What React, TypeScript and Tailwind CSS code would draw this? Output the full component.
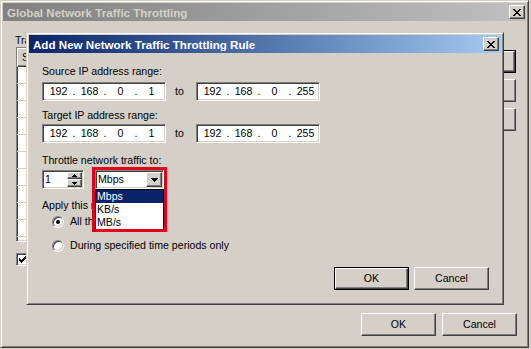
import { Fragment } from "react";
import type React from "react";

const raised =
  "border border-t-white border-l-white border-r-[#404040] border-b-[#404040] bg-[#d4d0c8] shadow-[inset_-1px_-1px_0_#808080]";
const sunken =
  "border border-t-[#808080] border-l-[#808080] border-r-white border-b-white shadow-[inset_1px_1px_0_#404040,inset_-1px_-1px_0_#d4d0c8]";
const frame =
  "border border-t-[#d4d0c8] border-l-[#d4d0c8] border-r-[#404040] border-b-[#404040] bg-[#d4d0c8] p-[2px] shadow-[inset_1px_1px_0_#fff,inset_-1px_-1px_0_#808080]";

const closePixels = [
  [0, 0, 2], [6, 0, 2],
  [1, 1, 2], [5, 1, 2],
  [2, 2, 4],
  [3, 3, 2],
  [2, 4, 4],
  [1, 5, 2], [5, 5, 2],
  [0, 6, 2], [6, 6, 2],
];

function CloseButton() {
  return (
    <div className={`flex h-[14px] w-[16px] items-center justify-center ${raised}`}>
      <svg width="8" height="7" viewBox="0 0 8 7" shapeRendering="crispEdges">
        {closePixels.map(([x, y, w], i) => (
          <rect key={i} x={x} y={y} width={w} height={1} fill="#000" />
        ))}
      </svg>
    </div>
  );
}

function Button({ children, isDefault }: { children: React.ReactNode; isDefault?: boolean }) {
  if (isDefault) {
    return (
      <div className="h-[23px] w-[75px] border border-black">
        <div className={`flex h-full w-full items-center justify-center ${raised}`}>{children}</div>
      </div>
    );
  }
  return (
    <div className={`flex h-[23px] w-[75px] items-center justify-center ${raised}`}>{children}</div>
  );
}

function IpField({ parts }: { parts: string[] }) {
  return (
    <div className={`flex h-[19px] w-[124px] items-center bg-white pl-[2px] ${sunken}`}>
      {parts.map((p, i) => (
        <Fragment key={i}>
          {i > 0 && <span className="w-[4px] text-center">.</span>}
          <span className="w-[27px] text-center">{p}</span>
        </Fragment>
      ))}
    </div>
  );
}

function IpRange() {
  return (
    <div className="flex items-center">
      <IpField parts={["192", "168", "0", "1"]} />
      <span className="w-[30px] pl-[9px]">to</span>
      <IpField parts={["192", "168", "0", "255"]} />
    </div>
  );
}

function Arrow({ down }: { down?: boolean }) {
  return (
    <svg width="7" height="4" viewBox="0 0 7 4" shapeRendering="crispEdges">
      {down ? (
        <path d="M0 0h7v1h-1v1h-1v1h-1v1h-1v-1h-1v-1h-1v-1h-1z" fill="#000" />
      ) : (
        <path d="M3 0h1v1h1v1h1v1h1v1h-7v-1h1v-1h1v-1h1z" fill="#000" />
      )}
    </svg>
  );
}

function SmallArrow({ down }: { down?: boolean }) {
  return (
    <svg width="5" height="3" viewBox="0 0 5 3" shapeRendering="crispEdges">
      {down ? (
        <path d="M0 0h5v1h-1v1h-1v1h-1v-1h-1v-1h-1z" fill="#000" />
      ) : (
        <path d="M2 0h1v1h1v1h1v1h-5v-1h1v-1h1z" fill="#000" />
      )}
    </svg>
  );
}

function Radio({ checked }: { checked?: boolean }) {
  return (
    <div className="flex h-[12px] w-[12px] items-center justify-center rounded-full border border-t-[#808080] border-l-[#808080] border-r-white border-b-white">
      <div className="flex h-[10px] w-[10px] items-center justify-center rounded-full bg-white shadow-[inset_1px_1px_0_#404040,inset_-1px_-1px_0_#d4d0c8]">
        {checked && <div className="h-[4px] w-[4px] rounded-full bg-black" />}
      </div>
    </div>
  );
}

function Checkbox() {
  return (
    <div className={`flex h-[13px] w-[13px] items-center justify-center bg-white ${sunken}`}>
      <svg width="7" height="7" viewBox="0 0 7 7" shapeRendering="crispEdges">
        <path d="M6 0h1v3h-1v1h-1v1h-1v1h-1v1h-1v-1h-1v-1h-1v-3h1v1h1v1h1v-1h1v-1h1z" fill="#000" />
      </svg>
    </div>
  );
}

function BackWindow() {
  return (
    <div className={`flex h-[348px] w-[529px] flex-col ${frame}`}>
      <div className="flex h-[18px] items-center justify-between bg-linear-to-r from-[#808080] to-[#c0c0c0] pl-[4px] pr-[1px]">
        <span className="text-[11.6px] font-bold text-[#d4d0c8]">Global Network Traffic Throttling</span>
        <CloseButton />
      </div>
      <div className="flex pl-[12px] pr-[10px]">
        <div className="flex flex-1 flex-col">
          <span className="mt-[13px] leading-[13px]">Traffic throttling rules:</span>
          <div className={`ml-[1px] flex h-[195px] flex-col overflow-hidden bg-white ${sunken}`}>
            <div className="flex">
              <div className={`flex h-[19px] w-[120px] items-center pl-[4px] ${raised}`}>Source</div>
              <div className={`flex h-[19px] w-[120px] items-center pl-[4px] ${raised}`}>Target</div>
              <div className={`flex h-[19px] flex-1 items-center pl-[4px] ${raised}`}>Limit</div>
            </div>
            {Array.from({ length: 10 }).map((_, i) => (
              <div key={i} className="flex h-[17px] shrink-0 border-b border-[#d4d0c8]">
                <div className="w-[120px] border-r border-[#d4d0c8]" />
                <div className="w-[120px] border-r border-[#d4d0c8]" />
              </div>
            ))}
          </div>
          <div className="ml-[1px] mt-[11px] flex items-center gap-[5px]">
            <Checkbox />
            <span className="leading-[13px]">Enable network traffic throttling</span>
          </div>
        </div>
        <div className="ml-[11px] flex w-[75px] flex-col gap-[6px] pt-[29px]">
          <Button isDefault>Add...</Button>
          <Button>Edit...</Button>
          <Button>Remove</Button>
        </div>
      </div>
      <div className="mb-[9px] mt-auto flex justify-end gap-[6px] pr-[9px]">
        <Button>OK</Button>
        <Button>Cancel</Button>
      </div>
    </div>
  );
}

function RuleDialog() {
  return (
    <div className={`absolute left-[26px] top-[32px] flex h-[273px] w-[478px] flex-col ${frame}`}>
      <div className="flex h-[18px] items-center justify-between bg-linear-to-r from-[#0a246a] to-[#a6caf0] pl-[4px] pr-[2px]">
        <span className="text-[11.6px] font-bold text-white">Add New Network Traffic Throttling Rule</span>
        <CloseButton />
      </div>
      <div className="flex flex-1 flex-col pl-[13px] pr-[12px]">
        <span className="mt-[12px] leading-[13px]">Source IP address range:</span>
        <div className="mt-[4px]">
          <IpRange />
        </div>
        <span className="mt-[8px] leading-[13px]">Target IP address range:</span>
        <div className="mt-[2px]">
          <IpRange />
        </div>
        <span className="mt-[11px] leading-[13px]">Throttle network traffic to:</span>
        <div className="mt-[3px] flex">
          <div className={`flex h-[19px] w-[42px] bg-white ${sunken}`}>
            <span className="flex-1 pl-[2px] leading-[17px]">1</span>
            <div className="flex w-[16px] flex-col py-[1px] pr-[1px]">
              <div className={`flex h-[7px] items-center justify-center ${raised}`}>
                <SmallArrow />
              </div>
              <div className={`flex h-[8px] items-center justify-center ${raised}`}>
                <SmallArrow down />
              </div>
            </div>
          </div>
          <div className="relative ml-[11px]">
            <div className={`flex h-[19px] w-[69px] items-center bg-white ${sunken}`}>
              <span className="flex-1 pl-[2px]">Mbps</span>
              <div className={`mr-[1px] flex h-[15px] w-[16px] items-center justify-center ${raised}`}>
                <Arrow down />
              </div>
            </div>
            <div className="absolute left-0 top-[19px] z-10 flex w-[69px] flex-col border border-black bg-white">
              <span className="h-[13px] bg-[#0a246a] pl-[1px] leading-[13px] text-white">Mbps</span>
              <span className="h-[13px] pl-[1px] leading-[13px]">KB/s</span>
              <span className="h-[13px] pl-[1px] leading-[13px]">MB/s</span>
            </div>
            <div className="pointer-events-none absolute -left-[3px] -top-[3px] z-20 h-[65px] w-[75px] border-[3px] border-[#e3001b]" />
          </div>
        </div>
        <span className="mt-[10px] leading-[13px]">Apply this rule:</span>
        <div className="ml-[10px] mt-[3px] flex h-[13px] items-center gap-[6px]">
          <Radio checked />
          <span className="leading-[13px]">All the time</span>
        </div>
        <div className="ml-[10px] mt-[11px] flex h-[13px] items-center gap-[6px]">
          <Radio />
          <span className="leading-[13px]">During specified time periods only</span>
        </div>
        <div className="mt-[15px] flex justify-end gap-[5px]">
          <Button isDefault>OK</Button>
          <Button>Cancel</Button>
        </div>
      </div>
    </div>
  );
}

export default function App() {
  return (
    <div className="relative h-[349px] w-[531px] overflow-hidden bg-[#d4d0c8] font-['Liberation_Sans',Arial,sans-serif] text-[10.6px] leading-[13px] text-black">
      <BackWindow />
      <RuleDialog />
    </div>
  );
}
